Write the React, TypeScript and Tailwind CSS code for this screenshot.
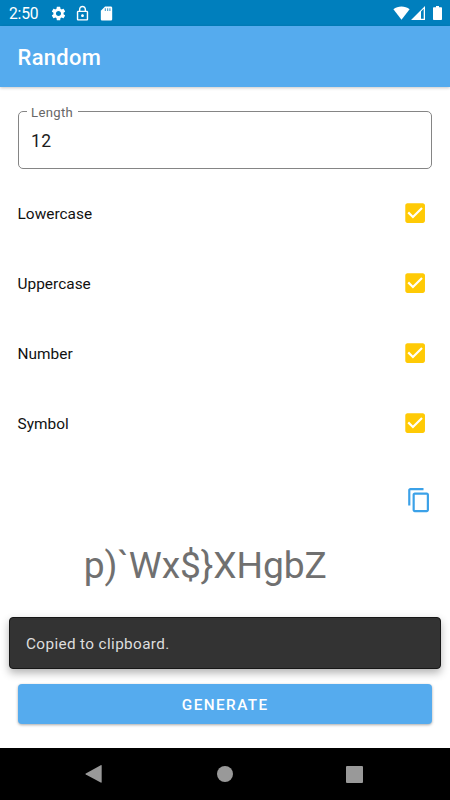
import React from "react";

const options = ["Lowercase", "Uppercase", "Number", "Symbol"];
const password = "p)`Wx$}XHgbZ";

function StatusBar() {
  return (
    <header className="flex h-[26px] items-center bg-[#007fbd] pl-[9px] pr-[8px] text-white">
      <span className="mt-[2px] w-[41px] text-[15.7px] leading-[26px] tracking-[-0.2px]">2:50</span>
      <svg className="h-[17px] w-[17px]" viewBox="0 0 24 24" fill="currentColor">
        <path d="M19.14 12.94c.04-.3.06-.61.06-.94 0-.32-.02-.64-.07-.94l2.03-1.58a.49.49 0 0 0 .12-.61l-1.92-3.32a.488.488 0 0 0-.59-.22l-2.39.96c-.5-.38-1.03-.7-1.62-.94l-.36-2.54a.484.484 0 0 0-.48-.41h-3.84c-.24 0-.43.17-.47.41l-.36 2.54c-.59.24-1.13.57-1.62.94l-2.39-.96c-.22-.08-.47 0-.59.22L2.74 8.87c-.12.21-.08.47.12.61l2.03 1.58c-.05.3-.09.63-.09.94s.02.64.07.94l-2.03 1.58a.49.49 0 0 0-.12.61l1.92 3.32c.12.22.37.29.59.22l2.39-.96c.5.38 1.03.7 1.62.94l.36 2.54c.05.24.24.41.48.41h3.84c.24 0 .44-.17.47-.41l.36-2.54c.59-.24 1.13-.56 1.62-.94l2.39.96c.22.08.47 0 .59-.22l1.92-3.32c.12-.22.07-.47-.12-.61l-2.01-1.58zM12 15.6c-1.98 0-3.6-1.62-3.6-3.6s1.62-3.6 3.6-3.6 3.6 1.62 3.6 3.6-1.62 3.6-3.6 3.6z" />
      </svg>
      <svg className="ml-[7px] h-[17px] w-[17px]" viewBox="0 0 24 24" fill="currentColor">
        <path d="M18 8h-1V6c0-2.76-2.24-5-5-5S7 3.24 7 6v2H6c-1.1 0-2 .9-2 2v10c0 1.1.9 2 2 2h12c1.1 0 2-.9 2-2V10c0-1.1-.9-2-2-2zM9 6c0-1.66 1.34-3 3-3s3 1.34 3 3v2H9V6zm9 14H6V10h12v10zm-6-3c1.1 0 2-.9 2-2s-.9-2-2-2-2 .9-2 2 .9 2 2 2z" />
      </svg>
      <svg className="ml-[7px] h-[17px] w-[17px]" viewBox="0 0 24 24" fill="currentColor">
        <path d="M18 2h-8L4.02 8 4 20c0 1.1.9 2 2 2h12c1.1 0 2-.9 2-2V4c0-1.1-.9-2-2-2z" />
        <path d="M9.5 4.500h1.800v4H9.500zM12.700 4.500h1.800v4h-1.800zM15.900 4.500h1.800v4h-1.800z" fill="#5aa9d2" />
      </svg>
      <div className="ml-auto flex items-center">
        <svg className="h-[14px] w-[17px]" viewBox="0 0 17 14" fill="currentColor">
          <path d="M8.500 13.800.400 3.300C4.800-.300 12.200-.300 16.600 3.300z" />
        </svg>
        <svg className="ml-[1px] h-[14px] w-[14px]" viewBox="0 0 14 14" fill="currentColor">
          <path fillRule="evenodd" d="M0 14 14 0v14zM10 5.500v7.300h2.700V2.800z" />
        </svg>
        <svg className="ml-[8px] h-[14px] w-[9px]" viewBox="0 0 9 14" fill="currentColor">
          <path d="M3 0h3v1.300h2c.6 0 1 .4 1 1V13c0 .6-.4 1-1 1H1c-.6 0-1-.4-1-1V2.300c0-.6.4-1 1-1h2z" />
        </svg>
      </div>
    </header>
  );
}

function CheckRow({ label }: { label: string }) {
  return (
    <label className="flex h-[70px] items-center justify-between pr-[4px]">
      <span className="text-[15.4px] leading-5 tracking-[0.03px] text-[#111]">{label}</span>
      <svg className="h-[26.25px] w-[26.25px]" viewBox="0 0 24 24" fill="#ffca05">
        <path d="M19 3H5c-1.11 0-2 .9-2 2v14c0 1.1.89 2 2 2h14c1.11 0 2-.9 2-2V5c0-1.1-.89-2-2-2zm-9 14l-5-5 1.410-1.410L10 14.170l7.590-7.590L19 8l-9 9z" />
      </svg>
    </label>
  );
}

export default function App() {
  return (
    <div className="relative flex h-[800px] w-[450px] flex-col overflow-hidden bg-white font-[Roboto,sans-serif]">
      <StatusBar />
      <div className="z-10 flex h-[61px] items-center bg-[#55abee] pl-[17.5px] pt-[2px] shadow-[0_1px_3px_rgba(0,0,0,0.22)]">
        <h1 className="text-[21.9px] font-medium leading-7 tracking-[0.35px] text-white">Random</h1>
      </div>
      <main className="flex h-[661px] flex-col pl-[17.5px] pr-[18px]">
        <fieldset className="mt-[16px] h-[66px] rounded-[5px] border border-[#858585] pl-[8px]">
          <legend className="px-[4.500px] text-[13.1px] leading-[17px] tracking-[0.35px] text-[#666]">
            <span className="relative top-px">Length</span>
          </legend>
          <div className="pl-[4.500px] pt-[9px] text-[17.5px] leading-6 tracking-[0.5px] text-[#1c1c1c]">12</div>
        </fieldset>
        <div className="mt-[9.500px]">
          {options.map((label) => (
            <CheckRow key={label} label={label} />
          ))}
        </div>
        <button className="mt-[28px] self-end" aria-label="Copy">
          <svg className="block h-[26.25px] w-[26.25px]" viewBox="0 0 24 24" fill="#3ba1e8">
            <path d="M16 1H4c-1.100 0-2 .9-2 2v14h2V3h12V1zm3 4H8c-1.100 0-2 .9-2 2v14c0 1.100.9 2 2 2h11c1.100 0 2-.9 2-2V7c0-1.100-.9-2-2-2zm0 16H8V7h11v14z" />
          </svg>
        </button>
        <p className="mt-[28px] pr-[39px] text-center text-[37.2px] leading-[48px] tracking-[-0.1px] text-[#707070]">{password}</p>
        <button className="mb-[24.500px] mt-auto h-[39.500px] rounded-[4px] bg-[#55abee] pl-[1px] pt-[3px] text-[15.3px] font-medium tracking-[1.45px] text-white shadow-[0_1px_3px_rgba(0,0,0,0.35)]">
          GENERATE
        </button>
      </main>
      <nav className="flex h-[52px] items-center bg-black pl-[85px] text-[#999]">
        <svg className="h-[18px] w-[17px]" viewBox="0 0 17 18" fill="currentColor">
          <path d="M.8 8.500 15.700.200Q16.700-.200 16.700.800V17Q16.700 18 15.700 17.500L.8 9.500Q0 9 .8 8.500Z" />
        </svg>
        <span className="ml-[115px] h-4 w-4 rounded-full bg-[#999]" />
        <span className="ml-[113px] h-[17px] w-[17px] rounded-[1px] bg-[#999]" />
      </nav>
      <div className="absolute left-[9px] top-[617px] z-20 flex h-[51.500px] w-[432px] items-center rounded-[4px] border border-[#171717] bg-[#333] pl-[16px] pt-[3px] text-[15.3px] tracking-[0.37px] text-[#dedede] shadow-[0_4px_8px_rgba(0,0,0,0.3)]">
        Copied to clipboard.
      </div>
    </div>
  );
}
